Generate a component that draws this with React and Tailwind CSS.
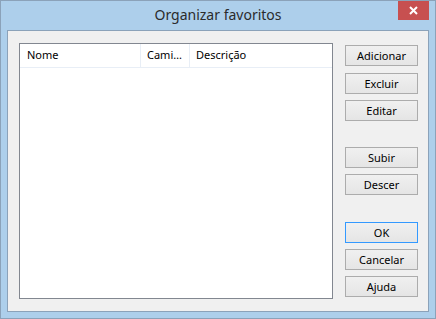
import React from "react";

const font = { fontFamily: '"Noto Sans", "Open Sans", sans-serif' };

const Btn = ({ label, primary, className = "" }) => (
  <button
    className={`h-[21px] w-[73px] border text-[11px] leading-none text-black bg-gradient-to-b from-[#f0f0f0] to-[#e5e5e5] ${
      primary ? "border-[#3399ff]" : "border-[#acacac]"
    } ${className}`}
  >
    {label}
  </button>
);

export default function App() {
  return (
    <div
      style={font}
      className="w-[436px] h-[319px] border border-[#8ba2b9] bg-[#adcfeb] flex flex-col"
    >
      {/* title bar */}
      <div className="h-[29px] grid grid-cols-[1fr_auto_1fr] items-start">
        <div />
        <div className="pt-[5px] text-[14px] leading-[18px] text-[#2b2b2b]">Organizar favoritos</div>
        <div className="flex justify-end pr-[6px]">
          <div className="w-[31px] h-[19px] bg-[#c75050] flex items-center justify-center">
            <svg width="9" height="9" viewBox="0 0 9 9">
              <path d="M1 1L8 8M8 1L1 8" stroke="white" strokeWidth="2" />
            </svg>
          </div>
        </div>
      </div>

      {/* client area */}
      <div className="mx-[6px] h-[282px] border border-[#8ba2b9] bg-[#f0f0f0] flex items-start pl-[11px] pt-[12px] pr-[10px] pb-[12px] gap-[12px]">
        <div className="w-[314px] h-[256px] border border-[#828790] bg-white">
          <div className="h-[24px] flex border-b border-[#e8eef6] text-[11px] text-black">
            <div className="w-[121px] pl-[7px] flex items-center border-r border-[#e8eef6]">Nome</div>
            <div className="w-[49px] pl-[6px] flex items-center border-r border-[#e8eef6]">Cami…</div>
            <div className="flex-1 pl-[6px] flex items-center">Descrição</div>
          </div>
        </div>

        <div className="flex flex-col mt-[2px]">
          <Btn label="Adicionar" />
          <Btn label="Excluir" className="mt-[7px]" />
          <Btn label="Editar" className="mt-[6px]" />
          <Btn label="Subir" className="mt-[26px]" />
          <Btn label="Descer" className="mt-[6px]" />
          <Btn label="OK" primary className="mt-[27px]" />
          <Btn label="Cancelar" className="mt-[6px]" />
          <Btn label="Ajuda" className="mt-[6px]" />
        </div>
      </div>
    </div>
  );
}
